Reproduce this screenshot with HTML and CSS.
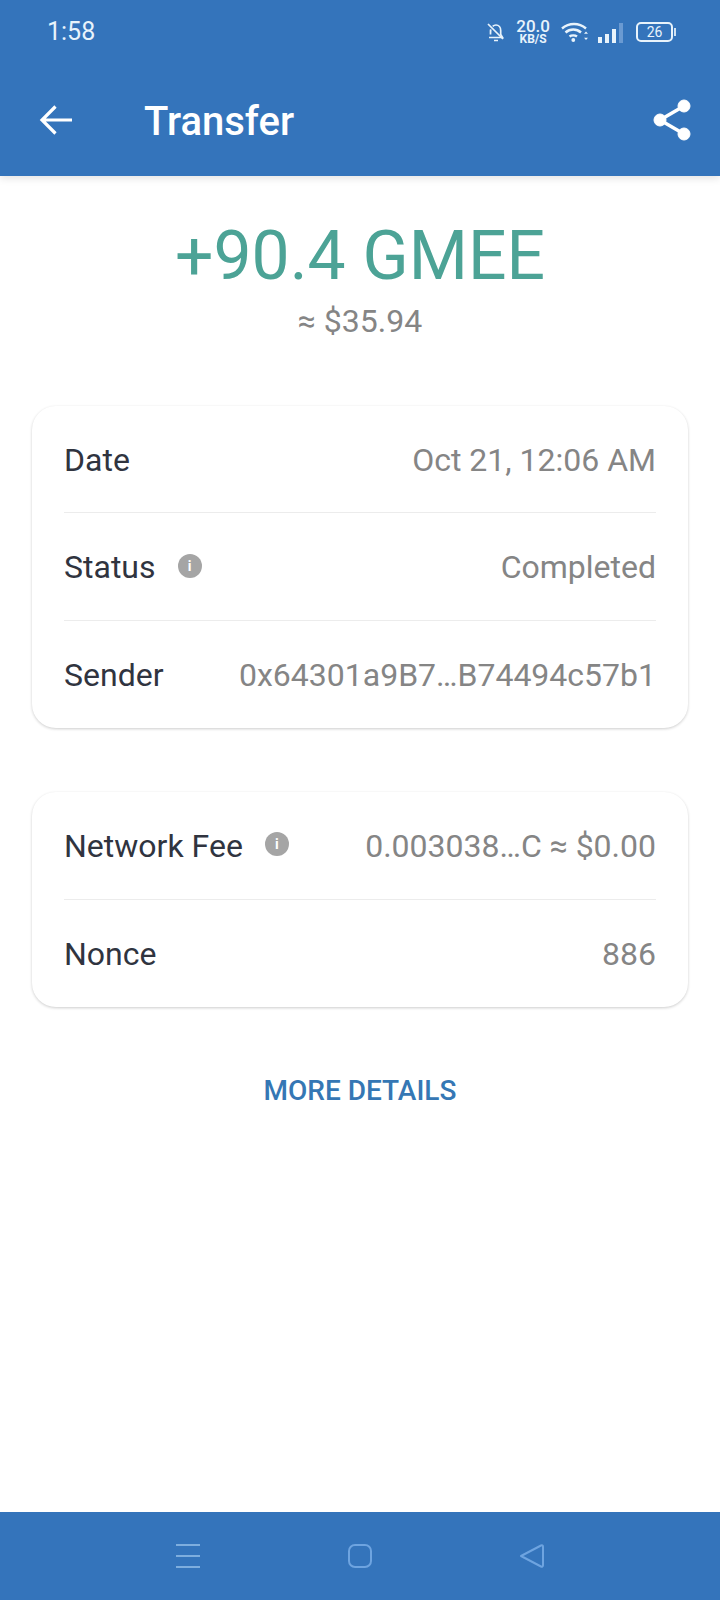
FILE: index.html
```html
<!DOCTYPE html>
<html lang="en">
<head>
    <meta charset="UTF-8">
    <meta name="viewport" content="width=device-width, initial-scale=1.0">
    <title>Transfer</title>
    <link rel="stylesheet" href="styles.css">
</head>
<body>
    <header class="top-bar">
        <div class="status-bar">
            <span class="clock">1:58</span>
            <div class="status-icons">
                <svg class="bell-icon" width="20" height="22" viewBox="0 0 20 22" fill="none" stroke="#e8f3fb" stroke-width="1.700">
                    <path d="M3 16.500h13.500l-1.800-3V9.500c0-3-2-5.500-4.700-5.500-1.300 0-2.400.5-3.300 1.400M4.700 8.500c-.2.500-.2 1-.2 1.500v3.500z"/>
                    <path d="M2 3l15 15M8 19.500h4"/>
                </svg>
                <div class="net-speed"><span class="speed-value">20.0</span><span class="speed-unit">KB/S</span></div>
                <svg class="wifi-icon" width="28" height="22" viewBox="0 0 28 22" fill="none" stroke="#e8f3fb" stroke-width="2.400">
                    <path d="M1 7.500c7-6 17-6 24 0M4.500 11.500c4.500-4 11-4 15.500 0M8.500 15.500c2-1.500 5.500-1.500 7.500 0"/>
                    <circle cx="12.300" cy="19" r="1.900" fill="#e8f3fb" stroke="none"/>
                    <path d="M25 10.500l-2 2.200h4zM25 19l-2-2.200h4z" fill="#e8f3fb" stroke="none"/>
                </svg>
                <div class="signal">
                    <span class="signal-bar bar-1"></span>
                    <span class="signal-bar bar-2"></span>
                    <span class="signal-bar bar-3"></span>
                    <span class="signal-bar bar-4"></span>
                </div>
                <div class="battery"><span class="battery-level">26</span></div>
            </div>
        </div>
        <div class="app-bar">
            <svg class="back-icon" width="34" height="30" viewBox="0 0 34 30" fill="none" stroke="#fff" stroke-width="3.200">
                <path d="M33 15H3M16.500 1.500L3 15l13.500 13.500"/>
            </svg>
            <h1 class="title">Transfer</h1>
            <svg class="share-icon" width="38" height="42" viewBox="0 0 38 42" fill="#fff" stroke="#fff">
                <path d="M31 7L7 21l24 14" fill="none" stroke-width="3.500"/>
                <circle cx="31" cy="7" r="6"/>
                <circle cx="7" cy="21" r="6"/>
                <circle cx="31" cy="35" r="6"/>
            </svg>
        </div>
    </header>

    <main class="content">
        <div class="amount">+90.4 GMEE</div>
        <div class="amount-usd">≈ $35.94</div>

        <section class="card">
            <div class="row">
                <span class="label">Date</span>
                <span class="value">Oct 21, 12:06 AM</span>
            </div>
            <div class="row">
                <span class="label">Status<i class="info">i</i></span>
                <span class="value">Completed</span>
            </div>
            <div class="row">
                <span class="label">Sender</span>
                <span class="value">0x64301a9B7…B74494c57b1</span>
            </div>
        </section>

        <section class="card">
            <div class="row">
                <span class="label">Network Fee<i class="info">i</i></span>
                <span class="value">0.003038…C ≈ $0.00</span>
            </div>
            <div class="row">
                <span class="label">Nonce</span>
                <span class="value">886</span>
            </div>
        </section>

        <div class="more-details">MORE DETAILS</div>
    </main>

    <nav class="bottom-nav">
        <svg width="26" height="24" viewBox="0 0 26 24" fill="none" stroke="#7eaede" stroke-width="2">
            <path d="M1 1h24M1 12h24M1 23h24"/>
        </svg>
        <svg width="26" height="26" viewBox="0 0 26 26" fill="none" stroke="#6ea4e0" stroke-width="2">
            <rect x="2" y="2" width="22" height="22" rx="6"/>
        </svg>
        <svg width="26" height="26" viewBox="0 0 26 26" fill="none" stroke="#6ea4e0" stroke-width="2">
            <path d="M2 13L22 2.500c1-.5 2 0 2 1.200v18.600c0 1.200-1 1.700-2 1.200z" stroke-linejoin="round"/>
        </svg>
    </nav>
</body>
</html>
```

FILE: styles.css
```css
* {
    margin: 0;
    padding: 0;
    box-sizing: border-box;
    font-family: Roboto, "Liberation Sans", sans-serif;
}
body {
    width: 720px;
    height: 1600px;
    display: flex;
    flex-direction: column;
    background-color: #fff;
    overflow: hidden;
}
.top-bar {
    height: 176px;
    background-color: #3474bb;
    box-shadow: 0 2px 8px rgba(0, 0, 0, 0.12);
    flex-shrink: 0;
}
.status-bar {
    height: 64px;
    display: flex;
    align-items: center;
    justify-content: space-between;
    padding: 0 47px 0 47px;
}
.clock {
    margin-top: -2px;
    font-size: 25px;
    color: #e8f3fb;
}
.status-icons {
    display: flex;
    align-items: center;
}
.net-speed {
    display: flex;
    flex-direction: column;
    align-items: center;
    margin-left: 10px;
    color: #e8f3fb;
    font-weight: 500;
}
.speed-value {
    font-size: 17px;
    line-height: 13px;
}
.speed-unit {
    font-size: 12px;
    line-height: 12px;
    font-weight: 700;
}
.wifi-icon {
    margin-left: 11px;
}
.signal {
    display: flex;
    align-items: flex-end;
    gap: 3px;
    height: 22px;
    margin-left: 9px;
}
.signal-bar {
    width: 4px;
    background-color: #e8f3fb;
}
.bar-1 {
    height: 6px;
}
.bar-2 {
    height: 9px;
}
.bar-3 {
    height: 14px;
}
.bar-4 {
    height: 20px;
    background-color: #6a9ad2;
}
.battery {
    position: relative;
    width: 37px;
    height: 20px;
    margin-left: 13px;
    border: 2px solid #e8f3fb;
    border-radius: 5px;
    display: flex;
    align-items: center;
    justify-content: center;
}
.battery::after {
    content: "";
    position: absolute;
    right: -5px;
    top: 4px;
    width: 2px;
    height: 8px;
    background-color: #cfe1f2;
}
.battery-level {
    font-size: 14px;
    color: #e8f3fb;
}
.app-bar {
    height: 112px;
    display: flex;
    align-items: center;
    padding: 0 29px 0 39px;
}
.title {
    flex: 1;
    margin-left: 71px;
    margin-top: 3px;
    font-size: 40px;
    font-weight: 500;
    color: #fff;
}
.content {
    flex: 1;
    padding: 0 32px;
}
.amount {
    margin-top: 41px;
    text-align: center;
    font-size: 67.800px;
    line-height: 78px;
    color: #4ca396;
}
.amount-usd {
    margin-top: 7px;
    margin-bottom: 66px;
    text-align: center;
    font-size: 32px;
    line-height: 38px;
    color: #858585;
}
.card {
    margin-bottom: 64px;
    padding: 0 32px;
    background-color: #fff;
    border-radius: 24px;
    box-shadow: 0 1px 3px rgba(0, 0, 0, 0.2);
}
.row {
    height: 107.400px;
    padding-top: 1px;
    display: flex;
    align-items: center;
    justify-content: space-between;
    border-bottom: 1px solid #ececec;
}
.row:last-child {
    border-bottom: none;
}
.label {
    display: flex;
    align-items: center;
    font-size: 32px;
    color: #30343f;
}
.value {
    font-size: 32px;
    color: #858585;
}
.info {
    width: 24px;
    height: 24px;
    margin-left: 22px;
    margin-top: -3px;
    border-radius: 50%;
    background-color: #a5a5a5;
    color: #fff;
    font-size: 14px;
    font-style: normal;
    font-weight: 700;
    line-height: 24px;
    text-align: center;
}
.more-details {
    margin-top: 67px;
    text-align: center;
    font-size: 28px;
    font-weight: 500;
    color: #3577b4;
}
.bottom-nav {
    height: 88px;
    flex-shrink: 0;
    display: flex;
    align-items: center;
    justify-content: space-between;
    padding: 0 175px;
    background-color: #3474bb;
}
```
